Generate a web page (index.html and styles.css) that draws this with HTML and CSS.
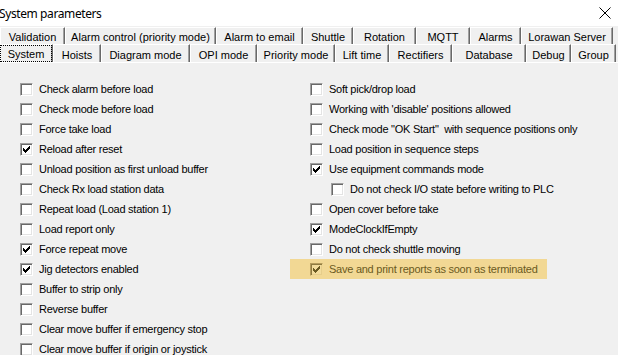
FILE: index.html
```html
<!DOCTYPE html>
<html lang="en">
<head>
    <meta charset="UTF-8">
    <title>System parameters</title>
    <link rel="stylesheet" href="styles.css">
</head>
<body>
    <svg width="0" height="0" class="defs">
        <defs>
            <path id="chk" d="M9 3h1v1h-1z M8 4h2v1h-2z M3 5h1v1h-1z M7 5h3v1h-3z M3 6h2v1h-2z M6 6h3v1h-3z M3 7h5v1h-5z M4 8h3v1h-3z M5 9h1v1h-1z"/>
        </defs>
    </svg>
    <div class="window">
        <div class="titlebar">
            <span class="title">System parameters</span>
            <svg class="close" width="12" height="12" viewBox="0 0 12 12">
                <path d="M0.5 0.5 L11.5 11.5 M11.5 0.5 L0.5 11.5" stroke="#000" stroke-width="1" fill="none"/>
            </svg>
        </div>

        <div class="tabs">
            <div class="tab-row back">
                <div class="tab w65">Validation</div>
                <div class="tab w151">Alarm control (priority mode)</div>
                <div class="tab w87">Alarm to email</div>
                <div class="tab w50">Shuttle</div>
                <div class="tab w63">Rotation</div>
                <div class="tab w54">MQTT</div>
                <div class="tab w51">Alarms</div>
                <div class="tab w92">Lorawan Server</div>
            </div>
            <div class="tab-row front">
                <div class="tab active w53"><span class="focus">System</span></div>
                <div class="tab w48">Hoists</div>
                <div class="tab w89">Diagram mode</div>
                <div class="tab w67">OPI mode</div>
                <div class="tab w78">Priority mode</div>
                <div class="tab w54">Lift time</div>
                <div class="tab w63">Rectifiers</div>
                <div class="tab w74">Database</div>
                <div class="tab w45">Debug</div>
                <div class="tab w45">Group</div>
            </div>
        </div>

        <div class="panel">
            <div class="col left">
                <div class="item"><span class="box"></span>Check alarm before load</div>
                <div class="item"><span class="box"></span>Check mode before load</div>
                <div class="item"><span class="box"></span>Force take load</div>
                <div class="item"><span class="box"><svg width="13" height="13"><use href="#chk"/></svg></span>Reload after reset</div>
                <div class="item"><span class="box"></span>Unload position as first unload buffer</div>
                <div class="item"><span class="box"></span>Check Rx load station data</div>
                <div class="item"><span class="box"></span>Repeat load (Load station 1)</div>
                <div class="item"><span class="box"></span>Load report only</div>
                <div class="item"><span class="box"><svg width="13" height="13"><use href="#chk"/></svg></span>Force repeat move</div>
                <div class="item"><span class="box"><svg width="13" height="13"><use href="#chk"/></svg></span>Jig detectors enabled</div>
                <div class="item"><span class="box"></span>Buffer to strip only</div>
                <div class="item"><span class="box"></span>Reverse buffer</div>
                <div class="item"><span class="box"></span>Clear move buffer if emergency stop</div>
                <div class="item"><span class="box"></span>Clear move buffer if origin or joystick</div>
            </div>
            <div class="col right">
                <div class="item"><span class="box"></span>Soft pick/drop load</div>
                <div class="item"><span class="box"></span>Working with 'disable' positions allowed</div>
                <div class="item"><span class="box"></span>Check mode "OK Start"&nbsp; with sequence positions only</div>
                <div class="item"><span class="box"></span>Load position in sequence steps</div>
                <div class="item"><span class="box"><svg width="13" height="13"><use href="#chk"/></svg></span>Use equipment commands mode</div>
                <div class="item sub"><span class="box"></span>Do not check I/O state before writing to PLC</div>
                <div class="item"><span class="box"></span>Open cover before take</div>
                <div class="item"><span class="box"><svg width="13" height="13"><use href="#chk"/></svg></span>ModeClockIfEmpty</div>
                <div class="item"><span class="box"></span>Do not check shuttle moving</div>
                <div class="item marked"><span class="box"><svg width="13" height="13"><use href="#chk"/></svg></span>Save and print reports as soon as terminated</div>
            </div>
        </div>
    </div>
</body>
</html>
```

FILE: styles.css
```css
body {
    margin: 0;
    width: 618px;
    height: 355px;
    overflow: hidden;
    background-color: #f0f0f0;
    font-family: "Liberation Sans", Arial, sans-serif;
    font-size: 11px;
    color: #000;
}
.defs {
    position: absolute;
}
.window {
    display: flex;
    flex-direction: column;
    height: 355px;
}

/* title bar */
.titlebar {
    flex: none;
    height: 26px;
    background-color: #fff;
    display: flex;
    align-items: center;
    justify-content: space-between;
}
.title {
    font-family: "Noto Sans", "Open Sans", sans-serif;
    font-size: 12px;
    letter-spacing: -0.4px;
    margin-left: -1px;
}
.close {
    margin-right: 7px;
}

/* tabs */
.tabs {
    flex: none;
    padding-top: 1px;
}
.tab-row {
    display: flex;
}
.tab {
    box-sizing: border-box;
    border-top: 1px solid #fff;
    border-left: 1px solid #fff;
    border-right: 1px solid #696969;
    box-shadow: inset -1px 0 #a0a0a0;
    text-align: center;
    line-height: 13px;
    white-space: nowrap;
}
.back .tab {
    height: 17px;
    padding-top: 3px;
}
.front .tab {
    height: 18px;
    padding-top: 4px;
}
.tab.active {
    padding-top: 1px;
}
.focus {
    display: block;
    margin: 0 1px 0 0;
    height: 15px;
    line-height: 17px;
    outline: 1px dotted #000;
}
.w45 { width: 45px; }
.w48 { width: 48px; }
.w50 { width: 50px; }
.w51 { width: 51px; }
.w53 { width: 53px; }
.w54 { width: 54px; }
.w63 { width: 63px; }
.w65 { width: 65px; }
.w67 { width: 67px; }
.w74 { width: 74px; }
.w78 { width: 78px; }
.w87 { width: 87px; }
.w89 { width: 89px; }
.w92 { width: 92px; }
.w151 { width: 151px; }

/* page */
.panel {
    flex: 1;
    min-height: 0;
    border-top: 1px solid #fff;
    padding: 16px 0 0 20px;
    display: flex;
    letter-spacing: -0.25px;
}
.col.left {
    width: 290px;
}
.item {
    height: 20px;
    display: flex;
    align-items: center;
    gap: 6px;
    white-space: nowrap;
}
.item.sub {
    padding-left: 21px;
}
.box {
    box-sizing: border-box;
    width: 13px;
    height: 13px;
    flex: none;
    background-color: #fff;
    border: 1px solid;
    border-color: #a0a0a0 #fff #fff #a0a0a0;
    box-shadow: inset 1px 1px #696969, inset -1px -1px #e3e3e3;
    position: relative;
}
.box svg {
    position: absolute;
    left: -1px;
    top: -1px;
    fill: #000;
    shape-rendering: crispEdges;
}
.item.marked {
    margin-left: -20px;
    padding-left: 20px;
    width: 257px;
    box-sizing: border-box;
    background-color: #f2d894;
    color: #6b5a22;
}
.marked .box {
    background-color: #f3dc9c;
    border-color: #b59c5c #f2d894 #f2d894 #b59c5c;
    box-shadow: inset 1px 1px #8f7a40, inset -1px -1px #e6cd8a;
}
.marked .box svg {
    fill: #6b5a22;
}
```
